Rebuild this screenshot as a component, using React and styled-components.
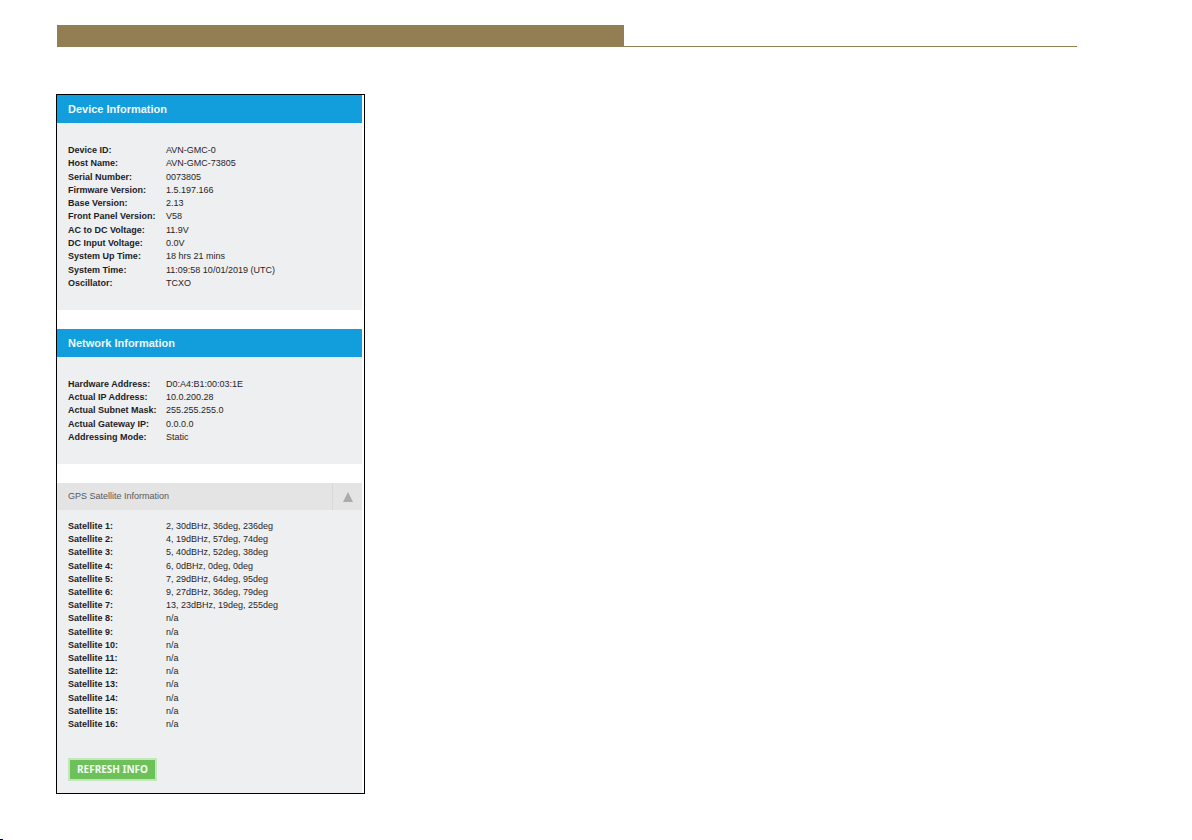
import { useState } from 'react';
import styled, { createGlobalStyle } from 'styled-components';

const GlobalStyle = createGlobalStyle`
  * {
    box-sizing: border-box;
  }
  body {
    margin: 0;
    background-color: #fff;
    color: #2b2426;
    font-family: 'Liberation Sans', Arial, sans-serif;
    font-size: 9px;
  }
`;

const Page = styled.div`
  display: flex;
  flex-direction: column;
  min-height: 100vh;
`;

const Content = styled.div`
  flex: 1;
  padding: 25px 115px 45px 56px;
`;

const Banner = styled.header`
  margin: 0 0 47px 1px;
  border-bottom: 1px solid #937d52;
  &::before {
    content: '';
    display: block;
    width: 55.6%;
    height: 21px;
    background-color: #937d52;
  }
`;

const Frame = styled.main`
  display: flex;
  flex-direction: column;
  gap: 19px;
  max-width: 309px;
  padding-right: 2px;
  border: 1px solid #000;
`;

const Panel = styled.section`
  background-color: #edeff1;
`;

const PanelTitle = styled.h2`
  margin: 0;
  padding: 0 11px;
  background-color: #129ddc;
  color: #eef8fd;
  font-size: 11px;
  line-height: 28px;
`;

const PanelBody = styled.div`
  padding: ${(props) => (props.$compact ? '10px 11px 12px' : '21px 11px 20px')};
`;

const InfoTable = styled.table`
  width: 100%;
  height: ${(props) => props.$height}px;
  border-collapse: collapse;
  table-layout: fixed;
  line-height: 13px;
  text-align: left;
  th,
  td {
    padding: 0;
    white-space: nowrap;
  }
  th {
    width: 98px;
    color: #231c1f;
  }
`;

const Toggle = styled.button`
  display: flex;
  width: 100%;
  padding: 0;
  border: 0;
  background-color: #e3e4e3;
  color: #5b5759;
  font: inherit;
  line-height: 27px;
  text-align: left;
  cursor: pointer;
`;

const ToggleLabel = styled.span`
  flex: 1;
  padding-left: 11px;
`;

const ToggleIcon = styled.span`
  display: flex;
  align-items: center;
  justify-content: center;
  width: 30px;
  border-left: 1px solid #d8d9d9;
  svg {
    transform: ${(props) => (props.$open ? 'none' : 'rotate(180deg)')};
  }
`;

const RefreshButton = styled.button`
  display: block;
  margin-top: 27px;
  padding: 0 7px;
  border: 2px solid #c5e6bd;
  background-color: #6cc15b;
  color: #f4fbf2;
  font-family: 'Noto Sans', sans-serif;
  font-size: 10px;
  font-weight: bold;
  line-height: 19px;
  cursor: pointer;
`;

const PageMark = styled.footer`
  width: 3px;
  height: 1px;
  background-color: #000;
  border-right: 1px solid #0000c0;
`;

const device = [
  ['Device ID', 'AVN-GMC-0'],
  ['Host Name', 'AVN-GMC-73805'],
  ['Serial Number', '0073805'],
  ['Firmware Version', '1.5.197.166'],
  ['Base Version', '2.13'],
  ['Front Panel Version', 'V58'],
  ['AC to DC Voltage', '11.9V'],
  ['DC Input Voltage', '0.0V'],
  ['System Up Time', '18 hrs 21 mins'],
  ['System Time', '11:09:58 10/01/2019 (UTC)'],
  ['Oscillator', 'TCXO'],
];

const network = [
  ['Hardware Address', 'D0:A4:B1:00:03:1E'],
  ['Actual IP Address', '10.0.200.28'],
  ['Actual Subnet Mask', '255.255.255.0'],
  ['Actual Gateway IP', '0.0.0.0'],
  ['Addressing Mode', 'Static'],
];

const tracked = [
  '2, 30dBHz, 36deg, 236deg',
  '4, 19dBHz, 57deg, 74deg',
  '5, 40dBHz, 52deg, 38deg',
  '6, 0dBHz, 0deg, 0deg',
  '7, 29dBHz, 64deg, 95deg',
  '9, 27dBHz, 36deg, 79deg',
  '13, 23dBHz, 19deg, 255deg',
];

const satellites = Array.from({ length: 16 }, (_, i) => [
  `Satellite ${i + 1}`,
  tracked[i] || 'n/a',
]);

function Info({ rows, height }) {
  return (
    <InfoTable $height={height}>
      <tbody>
        {rows.map(([name, value]) => (
          <tr key={name}>
            <th scope="row">{name}:</th>
            <td>{value}</td>
          </tr>
        ))}
      </tbody>
    </InfoTable>
  );
}

export default function App() {
  const [open, setOpen] = useState(true);

  return (
    <Page>
      <GlobalStyle />
      <Content>
        <Banner />
        <Frame>
          <Panel>
            <PanelTitle>Device Information</PanelTitle>
            <PanelBody>
              <Info rows={device} height={146} />
            </PanelBody>
          </Panel>
          <Panel>
            <PanelTitle>Network Information</PanelTitle>
            <PanelBody>
              <Info rows={network} height={66} />
            </PanelBody>
          </Panel>
          <Panel>
            <Toggle type="button" aria-expanded={open} onClick={() => setOpen(!open)}>
              <ToggleLabel>GPS Satellite Information</ToggleLabel>
              <ToggleIcon $open={open}>
                <svg width="10" height="10" viewBox="0 0 10 10" aria-hidden="true">
                  <path d="M5 0L10 10H0z" fill="#a9abad" />
                </svg>
              </ToggleIcon>
            </Toggle>
            <PanelBody $compact>
              {open && <Info rows={satellites} height={211} />}
              <RefreshButton type="button">REFRESH INFO</RefreshButton>
            </PanelBody>
          </Panel>
        </Frame>
      </Content>
      <PageMark />
    </Page>
  );
}
